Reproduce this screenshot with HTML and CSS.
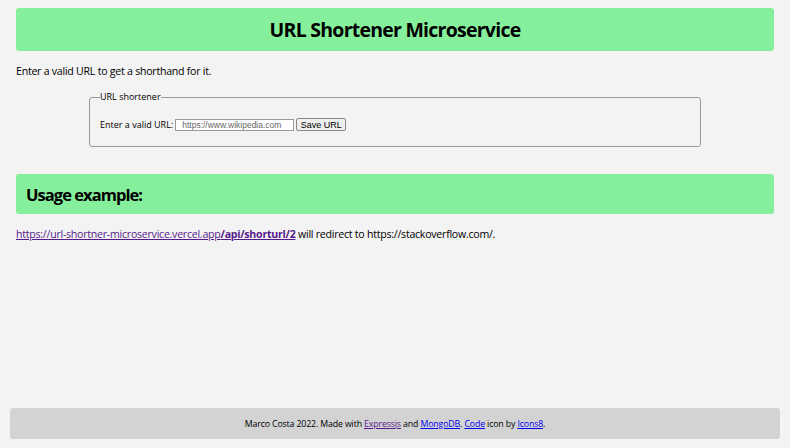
FILE: index.html
```html
<!DOCTYPE html>
<html>
<head>
<meta charset="utf-8">
<title>URL Shortener Microservice</title>
<link rel="stylesheet" href="styles.css">
</head>
<body>
<main class="page">
  <header class="banner">
    <h1 class="title">URL Shortener Microservice</h1>
  </header>
  <p class="intro">Enter a valid URL to get a shorthand for it.</p>
  <form class="form">
    <fieldset class="fieldset">
      <legend class="legend">URL shortener</legend>
      <div class="row">
        <label class="label" for="url">Enter a valid URL:</label>
        <input class="input" id="url" type="text" placeholder="https://www.wikipedia.com">
        <button class="button" type="button">Save URL</button>
      </div>
    </fieldset>
  </form>
  <section class="usage">
    <h2 class="usage-title">Usage example:</h2>
  </section>
  <p class="example"><a class="visited" href="#">https://url-shortner-microservice.vercel.app<b>/api/shorturl/2</b></a> will redirect to https://stackoverflow.com/.</p>
</main>
<footer class="footer">
  <p class="footer-text">Marco Costa 2022. Made with <a class="visited" href="#">Expressjs</a> and <a class="link" href="#">MongoDB</a>. <a class="link" href="#">Code</a> icon by <a class="link" href="#">Icons8</a>.</p>
</footer>
</body>
</html>
```
FILE: styles.css
```css
html, body {
  margin: 0;
  padding: 0;
}
body {
  background: #f3f3f3;
  font-family: "Open Sans", sans-serif;
  color: #000;
  height: 448px;
  display: flex;
  flex-direction: column;
  box-sizing: border-box;
  padding: 8px 10px 9px;
}
.page {
  flex: 1;
  padding: 0 6px;
}
.banner {
  background: #86ef9c;
  border-radius: 3px;
  height: 43px;
  display: flex;
  align-items: center;
  justify-content: center;
}
.title {
  margin: 0;
  font-size: 19.5px;
  letter-spacing: -0.75px;
  font-weight: 700;
}
.intro {
  margin: 12px 0 0;
  font-size: 10.6px;
  letter-spacing: -0.25px;
  line-height: 16px;
}
.form {
  display: flex;
  justify-content: center;
  margin-top: 12px;
}
.fieldset {
  width: 612px;
  box-sizing: border-box;
  margin: 0;
  border: 1px solid #999;
  border-radius: 3px;
  padding: 0 10px 15px;
  font-size: 9px;
}
.legend {
  padding: 0;
  font-size: 9px;
  line-height: 12px;
}
.row {
  display: flex;
  align-items: center;
  margin-top: 15px;
  height: 13px;
}
.label {
  font-size: 9px;
  margin-right: 2px;
}
.input {
  font-family: "Liberation Sans", Arial, sans-serif;
  font-size: 8.5px;
  width: 119px;
  height: 12px;
  box-sizing: border-box;
  border: 1px solid #999;
  padding: 0 6px;
  margin: 0;
  background: #fff;
}
.input::placeholder {
  color: #666;
}
.button {
  font-family: "Liberation Sans", Arial, sans-serif;
  font-size: 9px;
  height: 13px;
  width: 50px;
  padding: 0;
  margin-left: 2px;
  border: 1px solid #888;
  border-radius: 2px;
  background: #efefef;
  color: #000;
}
.usage {
  margin-top: 27px;
  background: #86ef9c;
  border-radius: 3px;
  height: 40px;
  display: flex;
  align-items: center;
  padding: 0 10px;
}
.usage-title {
  margin: 0;
  font-size: 16.5px;
  letter-spacing: -0.95px;
  font-weight: 700;
}
.example {
  margin: 12px 0 0;
  font-size: 10.6px;
  letter-spacing: -0.25px;
  line-height: 16px;
}
.visited {
  color: #551a8b;
}
.link {
  color: #0000ee;
}
.footer {
  background: #d3d3d3;
  border-radius: 3px;
  height: 31px;
  display: flex;
  align-items: center;
  justify-content: center;
}
.footer-text {
  margin: 0;
  font-size: 8.8px;
  letter-spacing: -0.15px;
}
```
